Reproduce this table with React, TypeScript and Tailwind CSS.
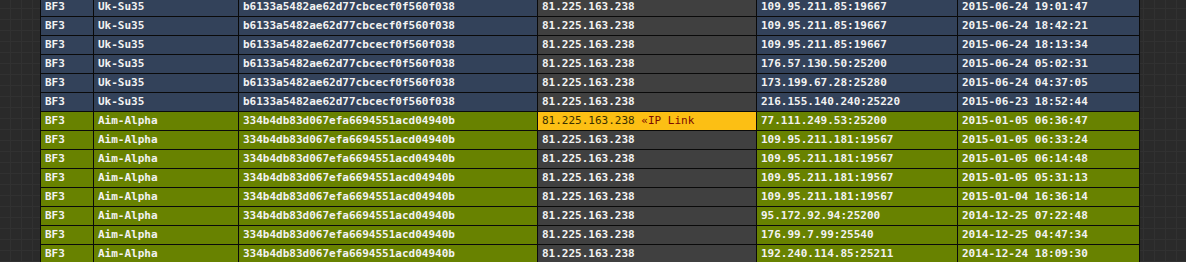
const blue = [
  ["109.95.211.85:19667", "2015-06-24 19:01:47"],
  ["109.95.211.85:19667", "2015-06-24 18:42:21"],
  ["109.95.211.85:19667", "2015-06-24 18:13:34"],
  ["176.57.130.50:25200", "2015-06-24 05:02:31"],
  ["173.199.67.28:25280", "2015-06-24 04:37:05"],
  ["216.155.140.240:25220", "2015-06-23 18:52:44"],
];

const green = [
  ["77.111.249.53:25200", "2015-01-05 06:36:47"],
  ["109.95.211.181:19567", "2015-01-05 06:33:24"],
  ["109.95.211.181:19567", "2015-01-05 06:14:48"],
  ["109.95.211.181:19567", "2015-01-05 05:31:13"],
  ["109.95.211.181:19567", "2015-01-04 16:36:14"],
  ["95.172.92.94:25200", "2014-12-25 07:22:48"],
  ["176.99.7.99:25540", "2014-12-25 04:47:34"],
  ["192.240.114.85:25211", "2014-12-24 18:09:30"],
];

const td = "border border-[#0a0a0a] px-[4px] py-0 h-[19px] leading-[18px] whitespace-nowrap";

export default function App() {
  const rows = [
    ...blue.map(([server, date]) => ({ game: "BF3", name: "Uk-Su35", hash: "b6133a5482ae62d77cbcecf0f560f038", server, date, bg: "bg-[#33425a]" })),
    ...green.map(([server, date]) => ({ game: "BF3", name: "Aim-Alpha", hash: "334b4db83d067efa6694551acd04940b", server, date, bg: "bg-[#688200]" })),
  ];

  return (
    <div className="w-[1186px] h-[262px] overflow-hidden bg-[#2a2a2a] bg-[linear-gradient(to_right,#313131_1px,transparent_1px),linear-gradient(to_bottom,#313131_1px,transparent_1px)] bg-[size:11px_11px] bg-[position:10px_8px]">
      <div className="ml-[40px] -mt-[3px] w-[1100px]">
        <table className="w-full border-collapse table-fixed font-['DejaVu_Sans_Mono',monospace] font-bold text-[11px] text-[#f2f2f2]">
          <colgroup>
            <col className="w-[53px]" />
            <col className="w-[145px]" />
            <col className="w-[299px]" />
            <col className="w-[219px]" />
            <col className="w-[201px]" />
            <col />
          </colgroup>
          <tbody>
            {rows.map((r, i) => (
              <tr key={i} className={r.bg}>
                <td className={td}>{r.game}</td>
                <td className={td}>{r.name}</td>
                <td className={td}>{r.hash}</td>
                {i === 6 ? (
                  <td className={`${td} bg-[#fcbf14] text-[#3a3000] font-normal`}>
                    81.225.163.238 <span className="text-[#7a0a00]">«IP Link</span>
                  </td>
                ) : (
                  <td className={`${td} bg-[#404040]`}>81.225.163.238</td>
                )}
                <td className={td}>{r.server}</td>
                <td className={td}>{r.date}</td>
              </tr>
            ))}
          </tbody>
        </table>
      </div>
    </div>
  );
}
